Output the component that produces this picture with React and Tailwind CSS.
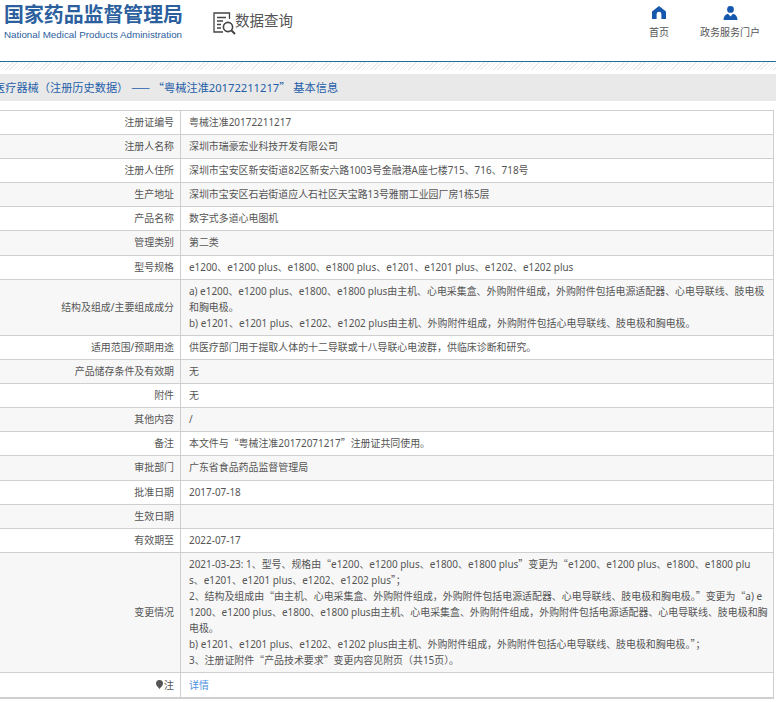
import React from "react";

const rows = [
  ["注册证编号", "粤械注准20172211217"],
  ["注册人名称", "深圳市瑞豪宏业科技开发有限公司"],
  ["注册人住所", "深圳市宝安区新安街道82区新安六路1003号金融港A座七楼715、716、718号"],
  ["生产地址", "深圳市宝安区石岩街道应人石社区天宝路13号雅丽工业园厂房1栋5层"],
  ["产品名称", "数字式多道心电图机"],
  ["管理类别", "第二类"],
  ["型号规格", "e1200、e1200 plus、e1800、e1800 plus、e1201、e1201 plus、e1202、e1202 plus"],
  [
    "结构及组成/主要组成成分",
    [
      "a) e1200、e1200 plus、e1800、e1800 plus由主机、心电采集盒、外购附件组成，外购附件包括电源适配器、心电导联线、肢电极",
      "和胸电极。",
      "b) e1201、e1201 plus、e1202、e1202 plus由主机、外购附件组成，外购附件包括心电导联线、肢电极和胸电极。",
    ],
  ],
  ["适用范围/预期用途", "供医疗部门用于提取人体的十二导联或十八导联心电波群，供临床诊断和研究。"],
  ["产品储存条件及有效期", "无"],
  ["附件", "无"],
  ["其他内容", "/"],
  ["备注", "本文件与“粤械注准20172071217”注册证共同使用。"],
  ["审批部门", "广东省食品药品监督管理局"],
  ["批准日期", "2017-07-18"],
  ["生效日期", ""],
  ["有效期至", "2022-07-17"],
  [
    "变更情况",
    [
      "2021-03-23: 1、型号、规格由“e1200、e1200 plus、e1800、e1800 plus”变更为“e1200、e1200 plus、e1800、e1800 plu",
      "s、e1201、e1201 plus、e1202、e1202 plus”；",
      "2、结构及组成由“由主机、心电采集盒、外购附件组成，外购附件包括电源适配器、心电导联线、肢电极和胸电极。”变更为“a) e",
      "1200、e1200 plus、e1800、e1800 plus由主机、心电采集盒、外购附件组成，外购附件包括电源适配器、心电导联线、肢电极和胸",
      "电极。",
      "b) e1201、e1201 plus、e1202、e1202 plus由主机、外购附件组成，外购附件包括心电导联线、肢电极和胸电极。”；",
      "3、注册证附件“产品技术要求”变更内容见附页（共15页）。",
    ],
  ],
];

// quotes and dashes take the full CJK width in the picture
const Cjk = ({ text }) =>
  text.split(/([“”—；]+)/).map((part, i) =>
    i % 2 === 1 ? (
      <span key={i} className="font-['Noto_Sans_CJK_SC',sans-serif]">{part}</span>
    ) : (
      part
    )
  );

const HomeIcon = () => (
  <svg width="14" height="13" viewBox="0 0 14 13" fill="#1558ad">
    <path d="M7 0 L14 5.6 V13 H9.4 V8.2 a2.4 2.4 0 0 0 -4.8 0 V13 H0 V5.6 Z" />
  </svg>
);

const UserIcon = () => (
  <svg width="15" height="14" viewBox="0 0 15 14" fill="#1558ad">
    <circle cx="7.5" cy="3.4" r="3.4" />
    <path d="M0.5 14 C0.5 10.6 2.4 8.4 5 7.8 L7.5 10.4 L10 7.8 C12.6 8.4 14.5 10.6 14.5 14 Z" />
  </svg>
);

const SearchDocIcon = () => (
  <svg width="24" height="24" viewBox="0 0 24 24" fill="none" stroke="#444" strokeWidth="1.3">
    <path d="M16.5 7 V1 H1 V20 H10" />
    <path d="M4 5.5 H13 M4 9 H10 M4 12.5 H8 M4 16 H8" />
    <circle cx="15" cy="15" r="4.6" strokeWidth="1.6" />
    <path d="M18.5 18.5 L22 22" strokeWidth="2" />
  </svg>
);

export default function App() {
  return (
    <div className="w-[776px] h-[702px] overflow-hidden bg-white font-['Noto_Sans','Noto_Sans_CJK_SC',sans-serif] text-[9.93px] text-[#555]">
      <header className="h-[62px] flex border-b border-[#1f7099]">
        <div className="pl-[4px] pt-[3px] w-[213px]">
          <div className="text-[19.9px] leading-[24px] font-bold text-[#2c5f9e] whitespace-nowrap">国家药品监督管理局</div>
          <div className="mt-[2px] text-[9.8px] leading-[12px] text-[#2c5f9e] whitespace-nowrap font-['Liberation_Sans',sans-serif]">National Medical Products Administration</div>
        </div>
        <div className="flex items-start pt-[12px]">
          <SearchDocIcon />
          <span className="ml-[-2px] mt-[-2px] text-[14.5px] leading-[20px] whitespace-nowrap">数据查询</span>
        </div>
        <nav className="ml-auto flex items-start pt-[6px] pr-[16px]">
          <a className="flex flex-col items-center gap-[7px] mr-[31px] text-[10px]">
            <HomeIcon />
            <span className="leading-[12px]">首页</span>
          </a>
          <a className="flex flex-col items-center gap-[6px] text-[10px]">
            <UserIcon />
            <span className="leading-[12px]">政务服务门户</span>
          </a>
        </nav>
      </header>

      <div className="h-[8px] bg-[repeating-linear-gradient(135deg,#ececec_0,#ececec_1px,#ffffff_1px,#ffffff_3px)]"></div>

      <h2 className="mt-[4px] h-[27px] ml-[-6px] bg-[#e9e9e9] text-[11.2px] leading-[27px] font-normal text-[#1f5ea8] whitespace-nowrap">
        <Cjk text="医疗器械（注册历史数据） —— “粤械注准20172211217” 基本信息" />
      </h2>

      <div className="mt-[9px] mr-[2px] border-t border-r border-b-2 border-[#cfcfcf]">
        {rows.map(([label, value], i) => (
          <div key={label} className={`grid grid-cols-[181px_1fr] border-b border-[#cfcfcf] leading-[16.1px] ${i % 2 === 1 ? "bg-[#f7f7f7]" : "bg-white"}`}>
            <div className="flex items-center justify-end pr-[6px] pb-[1px] border-r border-[#cfcfcf] whitespace-nowrap">{label}</div>
            <div className="pt-[3px] pb-[4px] pl-[8px] min-h-[23.1px] whitespace-nowrap">
              {Array.isArray(value) ? value.map((line) => <div key={line}><Cjk text={line} /></div>) : <Cjk text={value} />}
            </div>
          </div>
        ))}
        <div className="grid grid-cols-[181px_1fr] leading-[16.1px] bg-white">
          <div className="flex items-center justify-end gap-[1px] pr-[6px] border-r border-[#cfcfcf]">
            <svg width="7" height="9" viewBox="0 0 7 9" fill="#555">
              <path d="M3.5 0 a3.5 3.5 0 0 1 3.5 3.5 C7 5.8 4.6 7.6 3.5 9 C2.4 7.6 0 5.8 0 3.5 A3.5 3.5 0 0 1 3.5 0 Z" />
            </svg>
            <span>注</span>
          </div>
          <div className="py-[3.5px] pl-[8px]">
            <a className="text-[#4a90e2]">详情</a>
          </div>
        </div>
      </div>
    </div>
  );
}
